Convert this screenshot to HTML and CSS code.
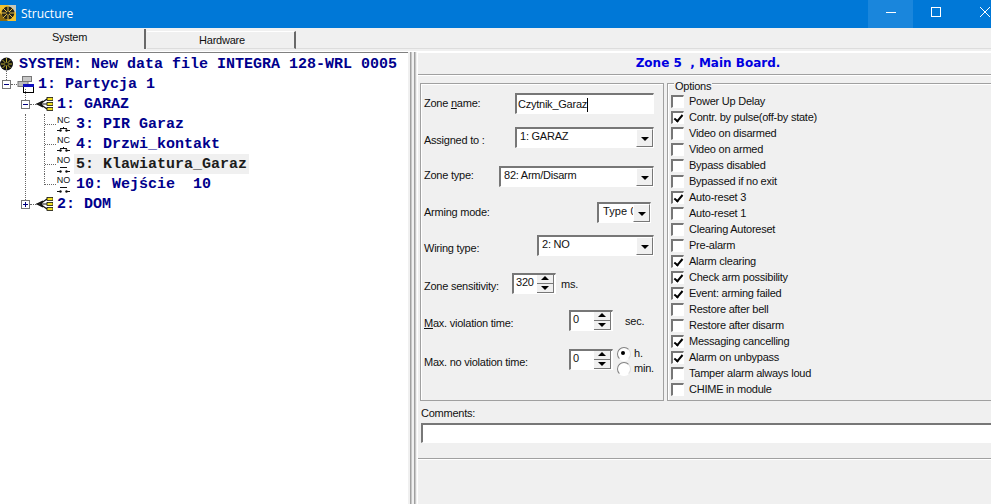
FILE: index.html
```html
<!DOCTYPE html>
<html lang="pl">
<head>
<meta charset="utf-8">
<title>Structure</title>
<link rel="stylesheet" href="styles.css">
</head>
<body>
<div class="window">
  <header class="titlebar">
    <svg class="appicon" width="16" height="16" viewBox="0 0 16 16"><rect width="16" height="16" fill="#f2c230"/><path d="M8 0h8v8z" fill="#c9c9b8"/><path d="M0 8l8 8H0z" fill="#8a6a10"/><circle cx="8" cy="8" r="6.4" fill="#24241c"/><path d="M8 1v14M1 8h14M3 3l10 10M13 3L3 13" stroke="#e8c040" stroke-width="1"/><circle cx="8" cy="8" r="1.6" fill="#24241c"/></svg>
    <span class="title">Structure</span>
    <div class="winctl">
      <span class="wbtn hover"><svg width="10" height="10" viewBox="0 0 10 10"><path d="M0 5.500h10" stroke="#fff"/></svg></span>
      <span class="wbtn"><svg width="10" height="10" viewBox="0 0 10 10"><rect x=".5" y=".5" width="9" height="9" fill="none" stroke="#fff"/></svg></span>
      <span class="wbtn"><svg width="10" height="10" viewBox="0 0 10 10"><path d="M0 0l10 10M10 0L0 10" stroke="#fff"/></svg></span>
    </div>
  </header>
  <nav class="tabs">
    <div class="tab active">System</div>
    <div class="tab">Hardware</div>
    <div class="tabfill"></div>
  </nav>
  <main class="main">
    <section class="tree">
      <div class="node root">
        <svg class="ic-sys" width="14" height="14" viewBox="0 0 14 14"><circle cx="6.5" cy="7" r="6.5" fill="#111"/><path d="M6.500 1v12M1 7h11M2.500 3l8 8M10.500 3l-8 8" stroke="#e6d23a" stroke-width=".8"/><circle cx="6.500" cy="7" r="1.500" fill="#111"/></svg>
        <span class="label">SYSTEM: New data file INTEGRA 128-WRL 0005</span>
      </div>
      <div class="node lv1">
        <span class="exp stub"><i class="minus"></i></span><span class="hdots d1"></span>
        <svg class="ic-part" width="17" height="17" viewBox="0 0 17 17"><rect x="5.500" y=".5" width="9" height="5" fill="#c8c8c8" stroke="#777"/><rect x="1" y="5.500" width="10" height="5" fill="#bbb" stroke="#777"/><rect x="6.500" y="8.500" width="10" height="8" fill="#fff" stroke="#000"/><rect x="6" y="8" width="11" height="3" fill="#1010c0"/></svg>
        <span class="label l1">1: Partycja 1</span>
      </div>
      <div class="node lv2">
        <span class="exp stub"><i class="minus"></i></span><span class="hdots d2"></span>
        <svg class="ic-grp" width="17" height="14" viewBox="0 0 17 14"><path d="M0 7h11M4 7l7-5M4 7l7 5M1 7l6-3M1 7l6 3" stroke="#111" stroke-width="1.200" fill="none"/><rect x="11" y=".5" width="6" height="3" fill="#f2e020" stroke="#111" stroke-width=".8"/><rect x="11" y="5.500" width="6" height="3" fill="#f2e020" stroke="#111" stroke-width=".8"/><rect x="11" y="10.500" width="6" height="3" fill="#f2e020" stroke="#111" stroke-width=".8"/></svg>
        <span class="label l2">1: GARAZ</span>
      </div>
      <div class="node lv3">
        <span class="guide g1"></span><span class="guide g2"></span><span class="hdots d3"></span>
        <span class="sw"><b>NC</b><svg width="13" height="6" viewBox="0 0 13 6"><path d="M0 3.500h3M10 3.500h3M3 1.500h7M6.500 0v1.500" stroke="#111" fill="none"/><circle cx="3.500" cy="3.500" r="1.200" fill="#111"/><circle cx="9.500" cy="3.500" r="1.200" fill="#111"/></svg></span>
        <span class="label l3">3: PIR Garaz</span>
      </div>
      <div class="node lv3">
        <span class="guide g1"></span><span class="guide g2"></span><span class="hdots d3"></span>
        <span class="sw"><b>NC</b><svg width="13" height="6" viewBox="0 0 13 6"><path d="M0 3.500h3M10 3.500h3M3 1.500h7M6.500 0v1.500" stroke="#111" fill="none"/><circle cx="3.500" cy="3.500" r="1.200" fill="#111"/><circle cx="9.500" cy="3.500" r="1.200" fill="#111"/></svg></span>
        <span class="label l3">4: Drzwi_kontakt</span>
      </div>
      <div class="node lv3">
        <span class="guide g1"></span><span class="guide g2"></span><span class="hdots d3"></span>
        <span class="sw"><b>NO</b><svg width="13" height="6" viewBox="0 0 13 6"><path d="M0 4.500h3M10 4.500h3M3 .5h7M6.500 0v.5" stroke="#111" fill="none"/><circle cx="3.500" cy="4.500" r="1.200" fill="#111"/><circle cx="9.500" cy="4.500" r="1.200" fill="#111"/></svg></span>
        <span class="label l3 selected">5: Klawiatura_Garaz</span>
      </div>
      <div class="node lv3">
        <span class="guide g1"></span><span class="guide g2 last"></span><span class="hdots d3"></span>
        <span class="sw"><b>NO</b><svg width="13" height="6" viewBox="0 0 13 6"><path d="M0 4.500h3M10 4.500h3M3 .5h7M6.500 0v.5" stroke="#111" fill="none"/><circle cx="3.500" cy="4.500" r="1.200" fill="#111"/><circle cx="9.500" cy="4.500" r="1.200" fill="#111"/></svg></span>
        <span class="label l3">10: Wejście&nbsp; 10</span>
      </div>
      <div class="node lv2">
        <span class="exp stub"><i class="plus"></i></span><span class="hdots d2"></span>
        <svg class="ic-grp" width="17" height="14" viewBox="0 0 17 14"><path d="M0 7h11M4 7l7-5M4 7l7 5M1 7l6-3M1 7l6 3" stroke="#111" stroke-width="1.200" fill="none"/><rect x="11" y=".5" width="6" height="3" fill="#f2e020" stroke="#111" stroke-width=".8"/><rect x="11" y="5.500" width="6" height="3" fill="#f2e020" stroke="#111" stroke-width=".8"/><rect x="11" y="10.500" width="6" height="3" fill="#f2e020" stroke="#111" stroke-width=".8"/></svg>
        <span class="label l2">2: DOM</span>
      </div>
    </section>
    <div class="splitter"><i></i><i></i></div>
    <section class="panel">
      <h1 class="heading">Zone 5&nbsp; , Main Board.</h1>
      <div class="groups">
        <div class="group form">
          <div class="row pr9"><label class="lbl">Zone <u>n</u>ame:</label><div class="edit w139"><span>Czytnik_Garaz</span><i class="caret"></i></div></div>
          <div class="row pr9"><label class="lbl low">Assigned to :</label><div class="combo w139"><span>1: GARAZ</span><i class="drop"></i></div></div>
          <div class="row pr9"><label class="lbl high">Zone type:</label><div class="combo w155"><span>82: Arm/Disarm</span><i class="drop"></i></div></div>
          <div class="row pr12"><label class="lbl">Arming mode:</label><div class="combo w54"><span>Type 0</span><i class="drop"></i></div></div>
          <div class="row pr9"><label class="lbl low">Wiring type:</label><div class="combo w117"><span>2: NO</span><i class="drop"></i></div></div>
          <div class="row"><label class="lbl low w88">Zone sensitivity:</label><div class="spin"><span>320</span><i class="btns"><em class="up"></em><em class="down"></em></i></div><span class="unit ml5">ms.</span></div>
          <div class="row"><label class="lbl low w145"><u>M</u>ax. violation time:</label><div class="spin"><span>0</span><i class="btns"><em class="up"></em><em class="down"></em></i></div><span class="unit ml12">sec.</span></div>
          <div class="row"><label class="lbl low w145">Max. no violation time:</label><div class="spin"><span>0</span><i class="btns"><em class="up"></em><em class="down"></em></i></div>
            <div class="radios"><span class="radio on">h.</span><span class="radio">min.</span></div></div>
        </div>
        <div class="group options">
          <span class="legend">Options</span>
          <div class="opt"><i class="cb"></i>Power Up Delay</div>
          <div class="opt"><i class="cb on"></i>Contr. by pulse(off-by state)</div>
          <div class="opt"><i class="cb"></i>Video on disarmed</div>
          <div class="opt"><i class="cb"></i>Video on armed</div>
          <div class="opt"><i class="cb"></i>Bypass disabled</div>
          <div class="opt"><i class="cb"></i>Bypassed if no exit</div>
          <div class="opt"><i class="cb on"></i>Auto-reset 3</div>
          <div class="opt"><i class="cb"></i>Auto-reset 1</div>
          <div class="opt"><i class="cb"></i>Clearing Autoreset</div>
          <div class="opt"><i class="cb"></i>Pre-alarm</div>
          <div class="opt"><i class="cb on"></i>Alarm clearing</div>
          <div class="opt"><i class="cb on"></i>Check arm possibility</div>
          <div class="opt"><i class="cb on"></i>Event: arming failed</div>
          <div class="opt"><i class="cb"></i>Restore after bell</div>
          <div class="opt"><i class="cb"></i>Restore after disarm</div>
          <div class="opt"><i class="cb on"></i>Messaging cancelling</div>
          <div class="opt"><i class="cb on"></i>Alarm on unbypass</div>
          <div class="opt"><i class="cb"></i>Tamper alarm always loud</div>
          <div class="opt"><i class="cb"></i>CHIME in module</div>
        </div>
      </div>
      <div class="comments">
        <label class="lbl">Comments:</label>
        <div class="memo"></div>
      </div>
      <div class="footer"></div>
    </section>
  </main>
</div>
</body>
</html>
```
FILE: styles.css
```css
* { box-sizing: border-box; }
html, body { margin: 0; padding: 0; height: 100%; overflow: hidden; background: #f0f0f0; }
body { font: 11px/13px "Liberation Sans", Arial, sans-serif; color: #111; letter-spacing: -.24px; }
.window { width: 991px; height: 504px; display: flex; flex-direction: column; overflow: hidden; }

.titlebar { height: 28px; background: #0078d7; display: flex; align-items: center; color: #fff; flex: none; letter-spacing: 0; }
.appicon { margin: -2px 0 0 0; flex: none; }
.title { margin-left: 5px; font: 12px/16px "Open Sans", sans-serif; }
.winctl { margin-left: auto; display: flex; height: 28px; }
.wbtn { width: 45px; display: flex; align-items: center; justify-content: center; padding-bottom: 4px; }
.wbtn:last-child { width: 33px; padding-left: 20px; }
.wbtn.hover { background: #1a86dc; }

.tabs { height: 24px; flex: none; display: flex; background: #f0f0f0; align-items: flex-end; padding-bottom: 2px; border-bottom: 1px solid #fff; }
.tab { height: 18px; width: 149px; flex: none; text-align: center; padding-left: 3px; line-height: 17px; border-top: 1px solid #fff; border-right: 2px solid #696969; background: #f0f0f0; border-bottom: 1px solid #ddd; }
.tab.active { height: 20px; width: 146px; padding: 1px 5px 0 0; line-height: 15px; border-bottom: 0; border-top: 0; margin-right: 1px; }
.tabfill { flex: 1; height: 1px; background: #ddd; }

.main { flex: 1; display: flex; min-height: 0; }
.tree { width: 408px; flex: none; background: #fff; border-top: 1px solid #808080; font: bold 15px/20px "Liberation Mono", "Courier New", monospace; color: #00008c; letter-spacing: 0; }
.splitter { width: 9px; flex: none; display: flex; gap: 2px; padding: 0 0 0 2px; }
.splitter i { width: 2px; background: #a0a0a0; border-right: 1px solid #c8c8c8; height: 100%; }

.node { height: 20px; display: flex; align-items: center; position: relative; white-space: pre; }
.node.root { height: 21px; }
.ic-sys { flex: none; }
.label { display: block; height: 20px; line-height: 21px; }
.root .label { margin-left: 5px; }
.l1 { margin-left: 4px; }
.l2 { margin-left: 4px; }
.l3 { margin-left: 4px; padding-left: 2px; }
.selected { background: #f0f0f0; width: 175px; color: #1c1c1c; }

.exp { width: 9px; height: 9px; flex: none; border: 1px solid #777; position: relative; background: #fff; }
.exp.stub::before { content: ""; position: absolute; left: 3px; bottom: 8px; height: 11px; border-left: 1px dotted #666; }
.lv1 { padding-left: 2px; }
.lv2 { padding-left: 21px; }
.minus, .plus { position: absolute; left: 1px; top: 3px; width: 5px; height: 1px; background: #000080; }
.plus::after { content: ""; position: absolute; left: 2px; top: -2px; width: 1px; height: 5px; background: #000080; }
.hdots { border-top: 1px dotted #666; flex: none; height: 0; }
.d1, .d2 { width: 6px; }
.d3 { width: 11px; }
.guide { width: 0; height: 20px; border-left: 1px dotted #666; flex: none; }
.g1 { margin-left: 25px; }
.g2 { margin-left: 18px; }
.g2.last { height: 11px; align-self: flex-start; }
.ic-part, .ic-grp { flex: none; }
.ic-part { margin-top: 1px; }
.sw { width: 13px; flex: none; display: flex; flex-direction: column; align-items: center; margin-left: 1px; font-family: "Liberation Sans", sans-serif; }
.sw b { font-weight: normal; font-size: 9px; line-height: 10px; color: #111; }
.sw svg { margin-top: 2px; }

.panel { width: 574px; flex: none; background: #f0f0f0; border-left: 1px solid #fff; border-top: 1px solid #fff; display: flex; flex-direction: column; overflow: hidden; }
.heading { margin: 0; height: 22px; padding-left: 7px; border-bottom: 1px solid #a0a0a0; box-shadow: 0 1px 0 #fff; text-align: center; color: #0000e0; font: bold 12px/20px "DejaVu Sans", sans-serif; letter-spacing: 0; flex: none; }
.groups { display: flex; gap: 3px; margin: 8px 0 0 2px; flex: none; width: 648px; height: 318px; }
.group { border: 1px solid #a0a0a0; box-shadow: inset 1px 1px 0 #fff; position: relative; height: 318px; flex: none; }
.form { width: 244px; display: grid; grid-template-rows: 34px 39px 36px 33px 38px 37px 39px 21px; padding: 9px 0 0 3px; }
.options { width: 400px; padding: 9px 0 0 3px; }
.legend { position: absolute; left: 6px; top: -4px; background: #f0f0f0; padding: 0 1px; line-height: 12px; }

.row { display: flex; align-items: flex-start; height: 21px; }
.pr9 { padding-right: 9px; }
.pr12 { padding-right: 12px; }
.lbl { padding-top: 4px; white-space: nowrap; display: block; }
.lbl.low { padding-top: 7px; }
.lbl.high { padding-top: 3px; }
.pr9 .lbl, .pr12 .lbl { margin-right: auto; }
.w88 { width: 88px; }
.w145 { width: 145px; }

.edit, .combo, .spin, .memo { background: #fff; border-style: solid; border-width: 2px 1px 1px 2px; border-color: #777 #fff #fff #777; position: relative; height: 21px; padding: 2px 0 0 1px; white-space: nowrap; overflow: hidden; flex: none; }
.combo { padding: 1px 0 0 3px; }
.edit { display: flex; padding-top: 3px; }
.caret { width: 1px; height: 14px; background: #000; }
.w139 { width: 139px; }
.w155 { width: 155px; }
.w54 { width: 54px; letter-spacing: .1px; padding-left: 4px; }
.w117 { width: 117px; }
.drop { position: absolute; right: 0; top: 0; bottom: 0; width: 17px; background: #f0f0f0; border-right: 1px solid #777; border-bottom: 1px solid #777; border-top: 1px solid #fff; border-left: 1px solid #fff; }
.drop::after { content: ""; position: absolute; left: 4px; top: 7px; border: 4px solid transparent; border-top: 4px solid #000; border-bottom: 0; }

.spin { width: 44px; padding: 1px 0 0 2px; }
.btns { position: absolute; right: 1px; top: 0; bottom: 0; width: 17px; display: flex; flex-direction: column; }
.btns em { flex: 1; background: #f0f0f0; position: relative; border-right: 1px solid #777; border-bottom: 1px solid #777; }
.up::after, .down::after { content: ""; position: absolute; left: 4px; border: 4px solid transparent; }
.up::after { top: 1px; border-bottom: 4px solid #000; border-top: 0; }
.down::after { top: 2px; border-top: 4px solid #000; border-bottom: 0; }
.unit { padding-top: 5px; }
.ml5 { margin-left: 5px; }
.ml12 { margin-left: 12px; }
.radios { margin: -2px 0 0 4px; display: flex; flex-direction: column; }
.radio { height: 15px; padding-left: 17px; position: relative; line-height: 13px; }
.radio::before { content: ""; position: absolute; left: 0; top: 0; width: 12px; height: 12px; border-radius: 50%; background: #fff; border: 1px solid; border-color: #808080 #ddd #fff #808080; }
.radio.on::after { content: ""; position: absolute; left: 4px; top: 4px; width: 4px; height: 4px; border-radius: 50%; background: #000; }

.opt { height: 16px; display: flex; align-items: center; white-space: nowrap; }
.cb { width: 13px; height: 13px; flex: none; margin-right: 5px; background: #fff; border-style: solid; border-width: 2px 1px 1px 2px; border-color: #777 #fff #fff #777; position: relative; }
.cb.on::after { content: ""; position: absolute; left: 3px; top: 0; width: 3px; height: 7px; border: solid #000; border-width: 0 2px 2px 0; transform: rotate(40deg); }

.comments { margin: 6px 0 0 3px; flex: none; }
.comments .lbl { padding: 0; margin-bottom: 3px; }
.memo { height: 20px; width: 600px; }
.footer { height: 2px; margin-top: 15px; border-top: 1px solid #a0a0a0; border-bottom: 1px solid #fff; flex: none; }
```
